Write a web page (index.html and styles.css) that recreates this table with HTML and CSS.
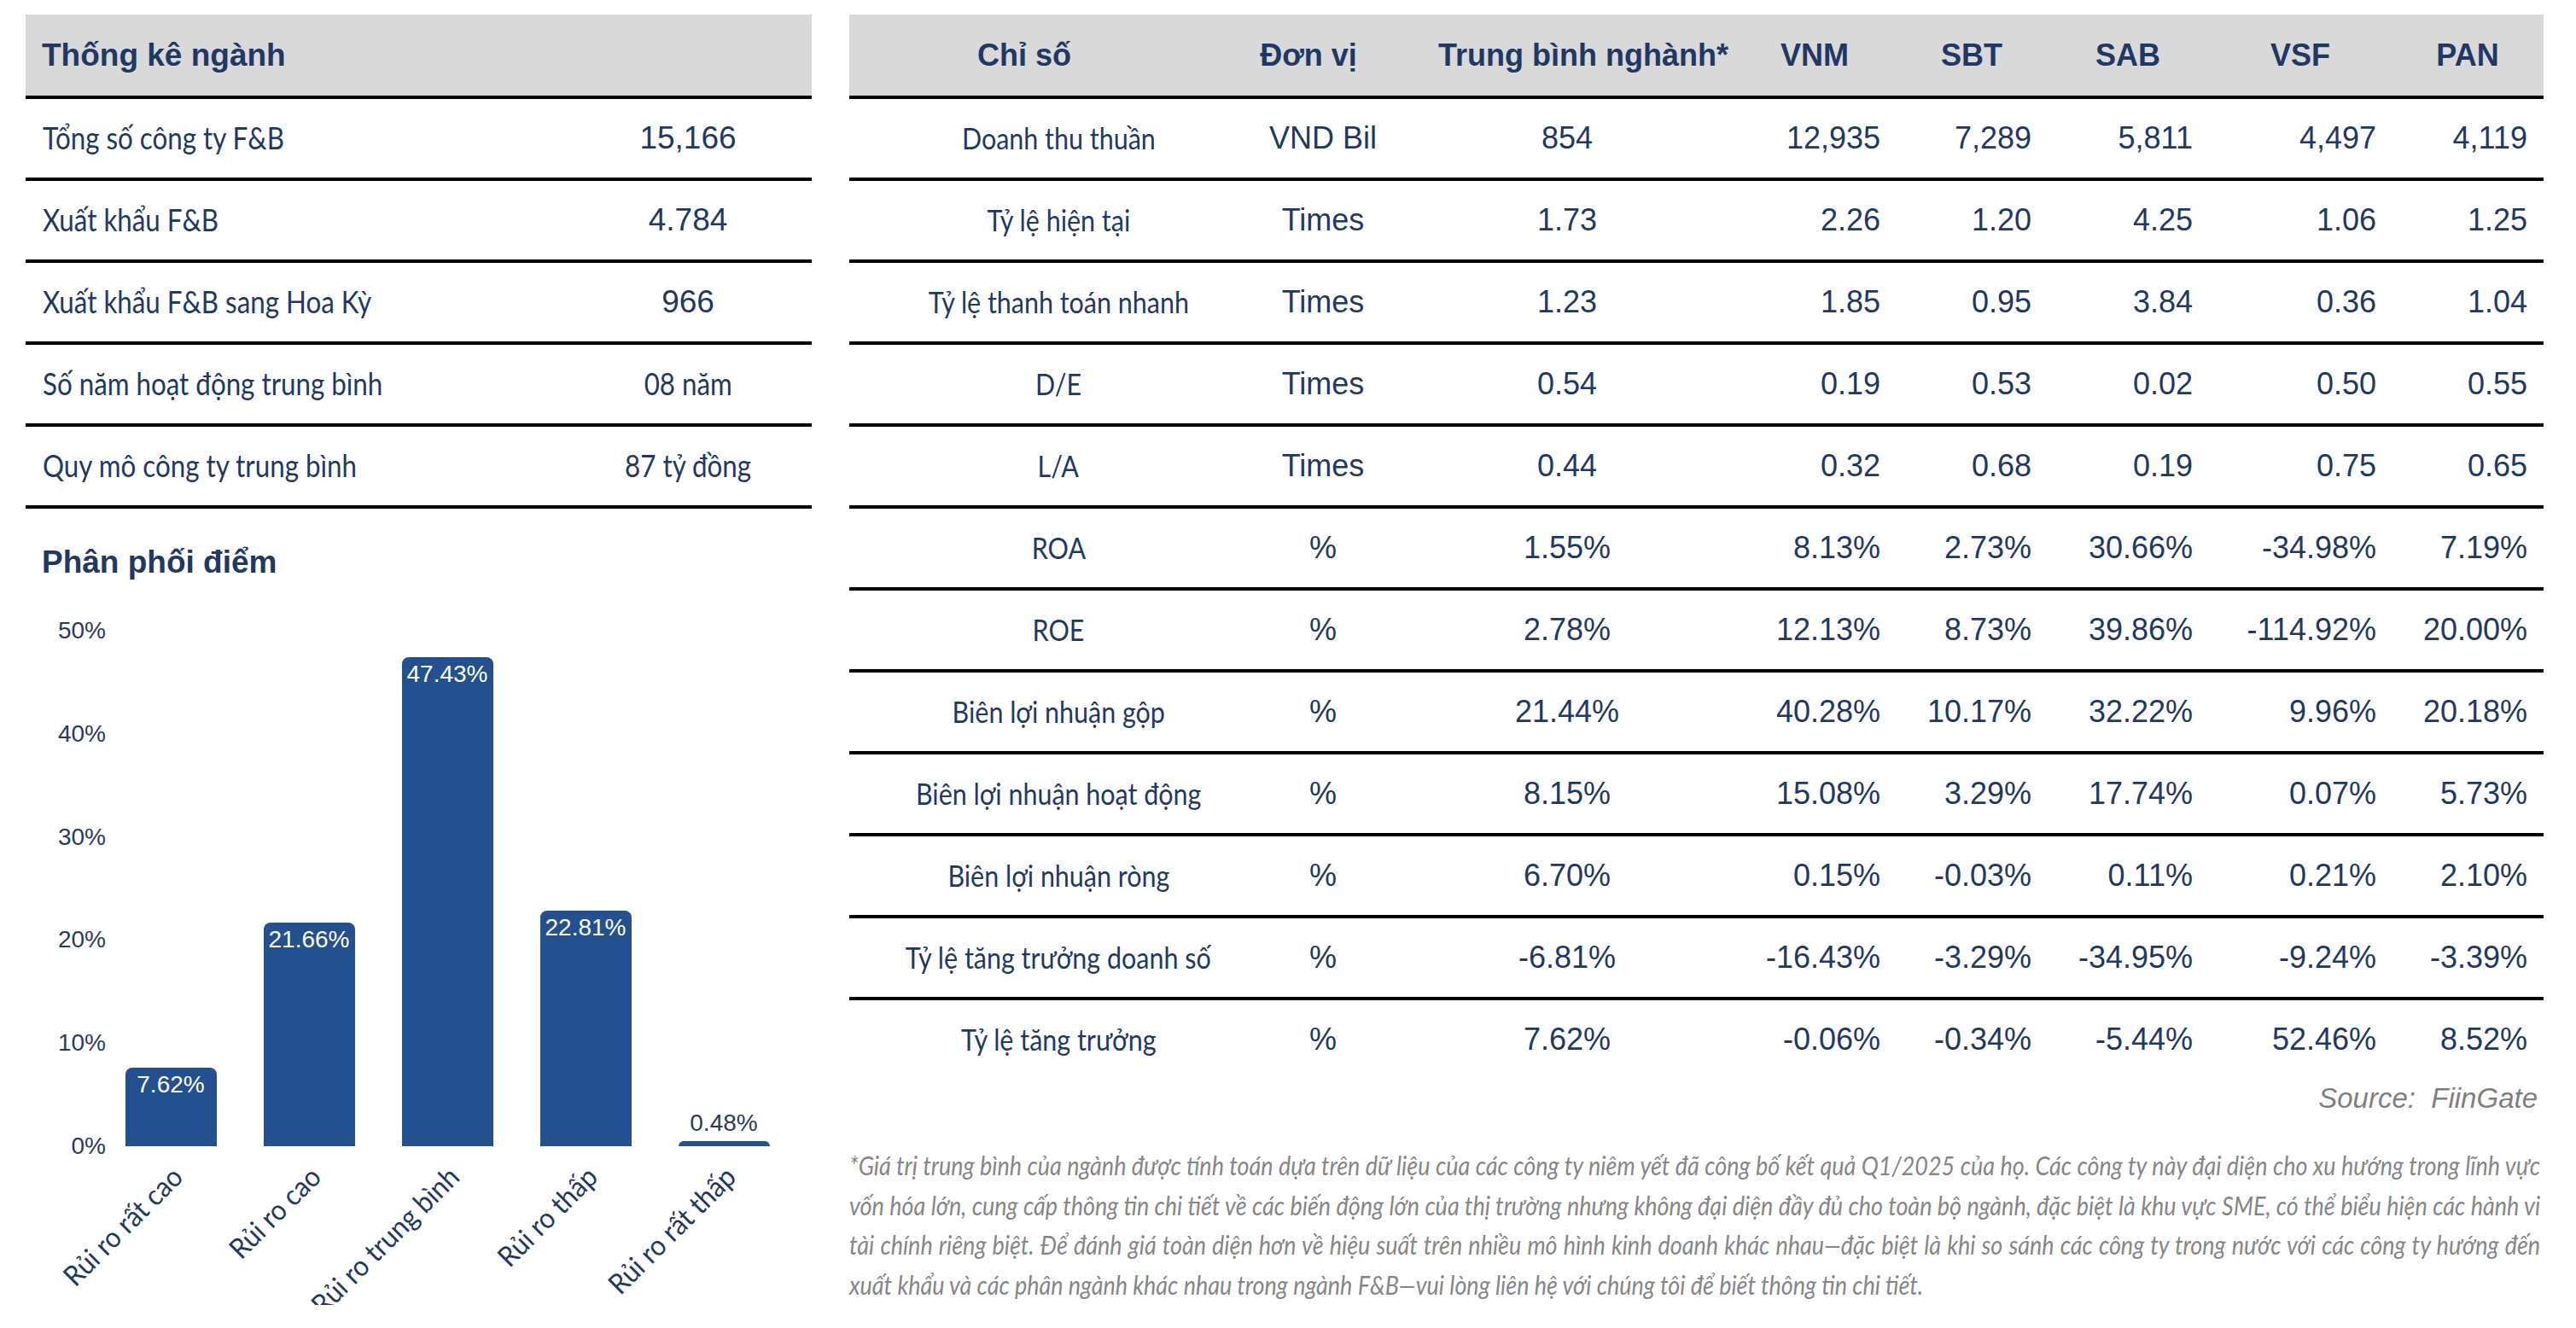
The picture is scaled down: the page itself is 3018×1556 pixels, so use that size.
FILE: index.html
```html
<!DOCTYPE html>
<html lang="vi">
<head>
<meta charset="utf-8">
<title>Thống kê ngành F&amp;B</title>
<link rel="stylesheet" href="styles.css">
</head>
<body>
<div class="page">
  <section class="left">
    <div class="stats">
      <div class="stats-head">Thống kê ngành</div>
      <div class="stats-row"><div class="stats-lbl"><span class="cond-l">Tổng số công ty F&amp;B</span></div><div class="stats-val">15,166</div></div>
      <div class="stats-row"><div class="stats-lbl"><span class="cond-l">Xuất khẩu F&amp;B</span></div><div class="stats-val">4.784</div></div>
      <div class="stats-row"><div class="stats-lbl"><span class="cond-l">Xuất khẩu F&amp;B sang Hoa Kỳ</span></div><div class="stats-val">966</div></div>
      <div class="stats-row"><div class="stats-lbl"><span class="cond-l">Số năm hoạt động trung bình</span></div><div class="stats-val alt"><span class="cond">08 năm</span></div></div>
      <div class="stats-row"><div class="stats-lbl"><span class="cond-l">Quy mô công ty trung bình</span></div><div class="stats-val alt"><span class="cond">87 tỷ đồng</span></div></div>
    </div>

    <h2 class="chart-title">Phân phối điểm</h2>
    <div class="chart">
      <div class="y-axis">
        <span>50%</span><span>40%</span><span>30%</span><span>20%</span><span>10%</span><span>0%</span>
      </div>
      <div class="plot">
        <div class="cat">
          <div class="bar-slot"><div class="bar" style="height:92px">7.62%</div></div>
          <div class="xlabel"><div class="xlabel-box"><span>Rủi ro rất cao</span></div></div>
        </div>
        <div class="cat">
          <div class="bar-slot"><div class="bar" style="height:262px">21.66%</div></div>
          <div class="xlabel"><div class="xlabel-box"><span>Rủi ro cao</span></div></div>
        </div>
        <div class="cat">
          <div class="bar-slot"><div class="bar" style="height:573px">47.43%</div></div>
          <div class="xlabel"><div class="xlabel-box"><span>Rủi ro trung bình</span></div></div>
        </div>
        <div class="cat">
          <div class="bar-slot"><div class="bar" style="height:276px">22.81%</div></div>
          <div class="xlabel"><div class="xlabel-box"><span>Rủi ro thấp</span></div></div>
        </div>
        <div class="cat">
          <div class="bar-slot"><span class="bar-out">0.48%</span><div class="bar" style="height:6px"></div></div>
          <div class="xlabel"><div class="xlabel-box"><span>Rủi ro rất thấp</span></div></div>
        </div>
      </div>
    </div>
  </section>

  <section class="right">
    <div class="ratios">
      <div class="ratios-head">
        <div>Chỉ số</div><div>Đơn vị</div><div>Trung bình nghành*</div><div>VNM</div><div>SBT</div><div>SAB</div><div>VSF</div><div>PAN</div>
      </div>
      <div class="ratios-row"><div class="lbl"><span class="cond">Doanh thu thuần</span></div><div class="ctr">VND Bil</div><div class="ctr">854</div><div class="num">12,935</div><div class="num">7,289</div><div class="num">5,811</div><div class="num">4,497</div><div class="num end">4,119</div></div>
      <div class="ratios-row"><div class="lbl"><span class="cond">Tỷ lệ hiện tại</span></div><div class="ctr">Times</div><div class="ctr">1.73</div><div class="num">2.26</div><div class="num">1.20</div><div class="num">4.25</div><div class="num">1.06</div><div class="num end">1.25</div></div>
      <div class="ratios-row"><div class="lbl"><span class="cond">Tỷ lệ thanh toán nhanh</span></div><div class="ctr">Times</div><div class="ctr">1.23</div><div class="num">1.85</div><div class="num">0.95</div><div class="num">3.84</div><div class="num">0.36</div><div class="num end">1.04</div></div>
      <div class="ratios-row"><div class="lbl"><span class="cond">D/E</span></div><div class="ctr">Times</div><div class="ctr">0.54</div><div class="num">0.19</div><div class="num">0.53</div><div class="num">0.02</div><div class="num">0.50</div><div class="num end">0.55</div></div>
      <div class="ratios-row"><div class="lbl"><span class="cond">L/A</span></div><div class="ctr">Times</div><div class="ctr">0.44</div><div class="num">0.32</div><div class="num">0.68</div><div class="num">0.19</div><div class="num">0.75</div><div class="num end">0.65</div></div>
      <div class="ratios-row"><div class="lbl"><span class="cond">ROA</span></div><div class="ctr">%</div><div class="ctr">1.55%</div><div class="num">8.13%</div><div class="num">2.73%</div><div class="num">30.66%</div><div class="num">-34.98%</div><div class="num end">7.19%</div></div>
      <div class="ratios-row"><div class="lbl"><span class="cond">ROE</span></div><div class="ctr">%</div><div class="ctr">2.78%</div><div class="num">12.13%</div><div class="num">8.73%</div><div class="num">39.86%</div><div class="num">-114.92%</div><div class="num end">20.00%</div></div>
      <div class="ratios-row"><div class="lbl"><span class="cond">Biên lợi nhuận gộp</span></div><div class="ctr">%</div><div class="ctr">21.44%</div><div class="num">40.28%</div><div class="num">10.17%</div><div class="num">32.22%</div><div class="num">9.96%</div><div class="num end">20.18%</div></div>
      <div class="ratios-row"><div class="lbl"><span class="cond">Biên lợi nhuận hoạt động</span></div><div class="ctr">%</div><div class="ctr">8.15%</div><div class="num">15.08%</div><div class="num">3.29%</div><div class="num">17.74%</div><div class="num">0.07%</div><div class="num end">5.73%</div></div>
      <div class="ratios-row"><div class="lbl"><span class="cond">Biên lợi nhuận ròng</span></div><div class="ctr">%</div><div class="ctr">6.70%</div><div class="num">0.15%</div><div class="num">-0.03%</div><div class="num">0.11%</div><div class="num">0.21%</div><div class="num end">2.10%</div></div>
      <div class="ratios-row"><div class="lbl"><span class="cond">Tỷ lệ tăng trưởng doanh số</span></div><div class="ctr">%</div><div class="ctr">-6.81%</div><div class="num">-16.43%</div><div class="num">-3.29%</div><div class="num">-34.95%</div><div class="num">-9.24%</div><div class="num end">-3.39%</div></div>
      <div class="ratios-row"><div class="lbl"><span class="cond">Tỷ lệ tăng trưởng</span></div><div class="ctr">%</div><div class="ctr">7.62%</div><div class="num">-0.06%</div><div class="num">-0.34%</div><div class="num">-5.44%</div><div class="num">52.46%</div><div class="num end">8.52%</div></div>
    </div>

    <div class="source">Source:&nbsp; FiinGate</div>

    <div class="note-wrap">
      <p class="note">
        <span class="note-line">*Giá trị trung bình của ngành được tính toán dựa trên dữ liệu của các công ty niêm yết đã công bố kết quả Q1/2025 của họ. Các công ty này đại diện cho xu hướng trong lĩnh vực</span>
        <span class="note-line">vốn hóa lớn, cung cấp thông tin chi tiết về các biến động lớn của thị trường nhưng không đại diện đầy đủ cho toàn bộ ngành, đặc biệt là khu vực SME, có thể biểu hiện các hành vi</span>
        <span class="note-line">tài chính riêng biệt. Để đánh giá toàn diện hơn về hiệu suất trên nhiều mô hình kinh doanh khác nhau—đặc biệt là khi so sánh các công ty trong nước với các công ty hướng đến</span>
        <span class="note-line last">xuất khẩu và các phân ngành khác nhau trong ngành F&amp;B—vui lòng liên hệ với chúng tôi để biết thông tin chi tiết.</span>
      </p>
    </div>
  </section>
</div>
</body>
</html>
```

FILE: styles.css
```css
html, body {
  margin: 0;
  padding: 0;
  overflow: hidden;
  background: #ffffff;
}

body {
  font-family: "Liberation Sans", Arial, sans-serif;
  color: #1f3864;
}

.page {
  display: flex;
  align-items: flex-start;
  gap: 44px;
  padding: 17px 0 0 30px;
}

.left {
  width: 921px;
  flex: none;
}

.right {
  width: 1985px;
  flex: none;
}

/* condensed label face */
.cond,
.cond-l {
  display: inline-block;
  font-family: Lato, "Noto Sans", sans-serif;
  white-space: nowrap;
  transform: scaleX(0.87);
}

.cond {
  transform-origin: 50% 50%;
}

.cond-l {
  transform-origin: 0 50%;
}

/* ---------- left stats table ---------- */
.stats-head {
  height: 95px;
  background: #d9d9d9;
  border-bottom: 4px solid #000;
  display: flex;
  align-items: center;
  padding-left: 19px;
  font-weight: bold;
  font-size: 37px;
}

.stats-row {
  height: 92px;
  border-bottom: 4px solid #000;
  display: flex;
  align-items: center;
}

.stats-lbl {
  width: 611px;
  padding-left: 20px;
  font-size: 36px;
  line-height: 44px;
}

.stats-val {
  width: 290px;
  text-align: center;
  font-size: 37px;
  line-height: 44px;
}

.stats-val.alt {
  font-size: 36px;
}

/* ---------- chart ---------- */
.chart-title {
  margin: 41px 0 0 19px;
  font-weight: bold;
  font-size: 37px;
  line-height: 44px;
}

.chart {
  display: flex;
  align-items: flex-start;
  margin-top: 43px;
}

.y-axis {
  width: 89px;
  height: 634px;
  display: flex;
  flex-direction: column;
  justify-content: space-between;
  align-items: flex-end;
  font-size: 28px;
  line-height: 30px;
  color: #2a3a5c;
}

.y-axis span {
  margin-right: -5px;
}

.plot {
  display: flex;
}

.cat {
  width: 162px;
}

.bar-slot {
  height: 619px;
  display: flex;
  flex-direction: column;
  justify-content: flex-end;
  align-items: center;
}

.bar {
  width: 107px;
  box-sizing: border-box;
  background: #23508f;
  border-radius: 8px 8px 0 0;
  padding-top: 5px;
  text-align: center;
  color: #ffffff;
  font-size: 28px;
  line-height: 30px;
}

.bar-out {
  font-size: 28px;
  line-height: 30px;
  margin-bottom: 6px;
  color: #2a3a5c;
}

.xlabel {
  height: 170px;
}

.xlabel-box {
  width: calc(50% + 7px);
  height: 40px;
  margin-top: 9px;
  display: flex;
  justify-content: flex-end;
  align-items: center;
  white-space: nowrap;
  font-family: Lato, "Noto Sans", sans-serif;
  font-size: 33px;
  transform: rotate(-45deg) scaleX(0.94);
  transform-origin: 100% 50%;
}

/* ---------- right ratios table ---------- */
.ratios-head {
  height: 95px;
  background: #d9d9d9;
  border-bottom: 4px solid #000;
  padding-right: 19px;
  display: grid;
  grid-template-columns: 410px 256px 388px 154px 214px 152px 252px 140px;
  align-items: center;
  text-align: center;
  font-weight: bold;
  font-size: 36px;
  white-space: nowrap;
}

.ratios-row {
  height: 92px;
  border-bottom: 4px solid #000;
  display: grid;
  grid-template-columns: 490px 130px 442px 153px 177px 189px 215px 189px;
  align-items: center;
  font-size: 36px;
  line-height: 44px;
  white-space: nowrap;
}

.ratios-row:last-child {
  border-bottom: 0;
}

.lbl {
  text-align: center;
  font-size: 35px;
}

.ctr {
  text-align: center;
}

.num {
  text-align: right;
  padding-right: 7px;
}

.num.end {
  padding-right: 19px;
}

/* ---------- source & footnote ---------- */
.source {
  margin-top: 5px;
  padding-right: 7px;
  text-align: right;
  font-style: italic;
  font-size: 33px;
  line-height: 36px;
  color: #7f7f7f;
}

.note-wrap {
  width: 1981px;
  margin-top: 37px;
}

.note {
  margin: 0;
  width: 2280px;
  transform: scaleX(0.8689);
  transform-origin: 0 0;
  font-family: Lato, "Noto Sans", sans-serif;
  font-style: italic;
  font-size: 31px;
  line-height: 46.7px;
  color: #868686;
}

.note-line {
  display: block;
  white-space: nowrap;
  text-align: justify;
  text-align-last: justify;
}

.note-line.last {
  text-align-last: left;
}
```
